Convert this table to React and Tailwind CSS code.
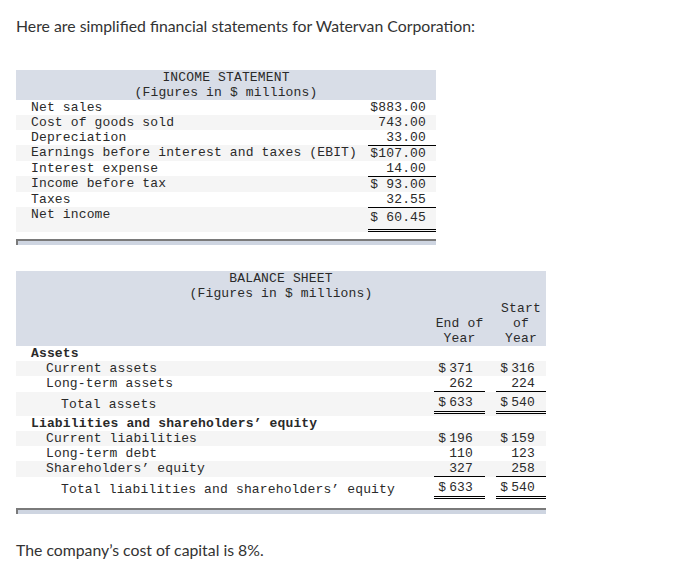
import React from "react";

const mono = "font-['Liberation_Mono','Courier_New',monospace] text-[13px] tracking-[0.15px] leading-[15px] text-[#2a2a2a]";

function IRow({ label, value, h, gray, topLine, dbl, vpad }) {
  return (
    <div className={`grid grid-cols-[1fr_68px] ${gray ? "bg-[#f5f5f5]" : ""}`} style={{ height: h }}>
      <div className="pl-[15px] whitespace-pre">{label}</div>
      <div
        className={`text-right pr-[10px] whitespace-pre ${topLine ? "border-t border-black" : ""} ${dbl ? "border-b-[3px] border-double border-black" : ""} ${vpad || ""}`}
      >
        {value}
      </div>
    </div>
  );
}

function Money({ d, n }) {
  return (
    <span className="inline-flex justify-end gap-[3px] whitespace-pre">
      {d ? <span>$</span> : null}
      <span>{n}</span>
    </span>
  );
}

function BRow({ label, indent, bold, a, b, h, gray, line, dbl, lpad, vpad }) {
  const cell = `text-right ${line ? "border-b border-black" : ""} ${dbl ? "border-b-[3px] border-double border-black" : ""}`;
  return (
    <div
      className={`grid grid-cols-[407px_51px_50px] gap-x-[11px] ${gray ? "bg-[#f5f5f5]" : ""}`}
      style={{ height: h }}
    >
      <div className={`whitespace-pre ${bold ? "font-bold" : ""} ${lpad || ""}`} style={{ paddingLeft: indent }}>
        {label}
      </div>
      <div className={`${cell} pr-[12px] ${vpad || ""}`} style={dbl ? { height: h - 2 } : null}>{a}</div>
      <div className={`${cell} pr-[11px] ${vpad || ""}`} style={dbl ? { height: h - 2 } : null}>{b}</div>
    </div>
  );
}

export default function App() {
  return (
    <div className="w-[695px] h-[570px] bg-white px-[16px] font-['Lato','Open_Sans',sans-serif] text-[#333]">
      <p className="pt-[16px] text-[15.8px] leading-[20px]">
        Here are simplified financial statements for Watervan Corporation:
      </p>

      <div className={`mt-[34px] w-[420px] ${mono}`}>
        <div className="bg-[#d8dde7] h-[30px] text-center">
          <div>INCOME STATEMENT</div>
          <div>(Figures in $ millions)</div>
        </div>
        <IRow label="Net sales" value="$883.00" h={15} />
        <IRow label="Cost of goods sold" value="743.00" h={15} gray />
        <IRow label="Depreciation" value="33.00" h={15} />
        <IRow label="Earnings before interest and taxes (EBIT)" value="$107.00" h={16} gray topLine />
        <IRow label="Interest expense" value="14.00" h={15} />
        <IRow label="Income before tax" value="$ 93.00" h={16} gray topLine />
        <IRow label="Taxes" value="32.55" h={15} />
        <IRow label="Net income" value="$ 60.45" h={25} gray topLine dbl vpad="pt-[2px]" />
        <div className="mt-[7px] h-[6px] border-t-2 border-l-2 border-[#7a7a7a] bg-[#ced5e1]" />
      </div>

      <div className={`mt-[26px] w-[530px] ${mono}`}>
        <div className="bg-[#d8dde7] h-[75px]">
          <div className="text-center">BALANCE SHEET</div>
          <div className="text-center">(Figures in $ millions)</div>
          <div className="grid grid-cols-[407px_51px_50px] gap-x-[11px] h-[45px]">
            <div />
            <div className="flex flex-col justify-end text-center whitespace-pre">
              <div>End of</div>
              <div>Year</div>
            </div>
            <div className="flex flex-col justify-end text-center">
              <div>Start</div>
              <div>of</div>
              <div>Year</div>
            </div>
          </div>
        </div>
        <BRow label="Assets" indent={15} bold h={15} />
        <BRow label="Current assets" indent={30} h={15} gray a={<Money d n="371" />} b={<Money d n="316" />} />
        <BRow label="Long-term assets" indent={30} h={16} line a={<Money n="262" />} b={<Money n="224" />} />
        <BRow label="Total assets" indent={45} h={24} gray dbl lpad="pt-[5px]" vpad="pt-[3px]" a={<Money d n="633" />} b={<Money d n="540" />} />
        <BRow label="Liabilities and shareholders’ equity" indent={15} bold h={15} />
        <BRow label="Current liabilities" indent={30} h={15} gray a={<Money d n="196" />} b={<Money d n="159" />} />
        <BRow label="Long-term debt" indent={30} h={15} a={<Money n="110" />} b={<Money n="123" />} />
        <BRow label="Shareholders’ equity" indent={30} h={16} gray line a={<Money n="327" />} b={<Money n="258" />} />
        <BRow label="Total liabilities and shareholders’ equity" indent={45} h={24} dbl lpad="pt-[5px]" vpad="pt-[3px]" a={<Money d n="633" />} b={<Money d n="540" />} />
        <div className="mt-[7px] h-[6px] border-t-2 border-l-2 border-[#7a7a7a] bg-[#ced5e1]" />
      </div>

      <p className="mt-[26px] text-[15.8px] leading-[20px]">The company’s cost of capital is 8%.</p>
    </div>
  );
}
